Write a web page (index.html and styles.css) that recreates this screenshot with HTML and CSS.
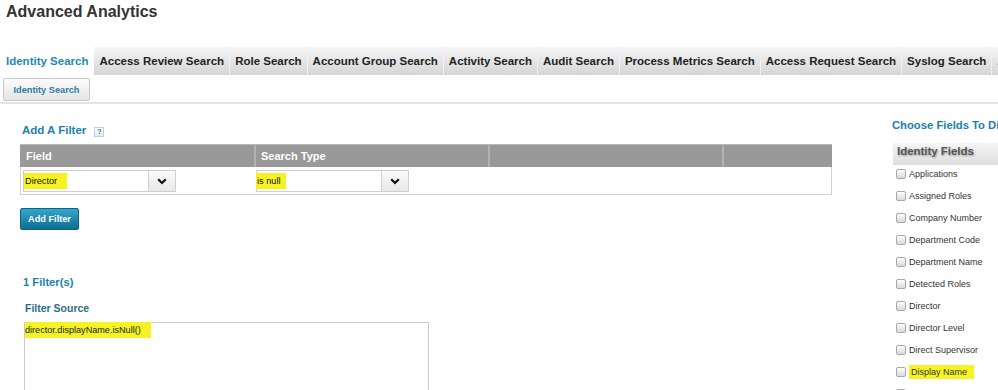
FILE: index.html
```html
<!DOCTYPE html>
<html lang="en">
  <head>
    <meta charset="UTF-8" />
    <meta name="viewport" content="width=device-width, initial-scale=1.0" />
    <title>Advanced Analytics</title>
    <link rel="stylesheet" href="styles.css">
  </head>
  <body>
    <div class="page">
      <h1 class="title">Advanced Analytics</h1>

      <div class="tabs">
        <div class="tab active">Identity Search</div>
        <div class="tab">Access Review Search</div>
        <div class="tab">Role Search</div>
        <div class="tab">Account Group Search</div>
        <div class="tab">Activity Search</div>
        <div class="tab">Audit Search</div>
        <div class="tab">Process Metrics Search</div>
        <div class="tab">Access Request Search</div>
        <div class="tab">Syslog Search</div>
        <div class="tab">Advanced Search</div>
      </div>

      <div class="subbar">
        <button class="subtab">Identity Search</button>
      </div>

      <div class="content">
        <div class="main">
          <div class="section-title">
            Add A Filter
            <span class="help">?</span>
          </div>

          <div class="filter-table">
            <div class="ft-head">
              <div>Field</div>
              <div>Search Type</div>
              <div></div>
              <div></div>
            </div>
            <div class="ft-row">
              <div class="ft-cell">
                <div class="select">
                  <div class="select-value"><span class="mark mark-field">Director</span></div>
                  <div class="select-btn">
                    <svg width="10" height="7" viewBox="0 0 10 7"><polyline points="1.2,1.2 5,5 8.8,1.2" fill="none" stroke="#111" stroke-width="2.2"/></svg>
                  </div>
                </div>
              </div>
              <div class="ft-cell">
                <div class="select">
                  <div class="select-value"><span class="mark mark-type">is null</span></div>
                  <div class="select-btn">
                    <svg width="10" height="7" viewBox="0 0 10 7"><polyline points="1.2,1.2 5,5 8.8,1.2" fill="none" stroke="#111" stroke-width="2.2"/></svg>
                  </div>
                </div>
              </div>
              <div class="ft-cell"></div>
              <div class="ft-cell"></div>
            </div>
          </div>

          <button class="btn-primary">Add Filter</button>

          <div class="count-title">1 Filter(s)</div>
          <div class="source-label">Filter Source</div>
          <div class="source-box"><span class="mark mark-source">director.displayName.isNull()</span></div>
        </div>

        <div class="sidebar">
          <div class="side-title">Choose Fields To Display</div>
          <div class="side-head">Identity Fields</div>
          <div class="field-list">
            <label class="field-item"><span class="check"></span><span class="field-name">Applications</span></label>
            <label class="field-item"><span class="check"></span><span class="field-name">Assigned Roles</span></label>
            <label class="field-item"><span class="check"></span><span class="field-name">Company Number</span></label>
            <label class="field-item"><span class="check"></span><span class="field-name">Department Code</span></label>
            <label class="field-item"><span class="check"></span><span class="field-name">Department Name</span></label>
            <label class="field-item"><span class="check"></span><span class="field-name">Detected Roles</span></label>
            <label class="field-item"><span class="check"></span><span class="field-name">Director</span></label>
            <label class="field-item"><span class="check"></span><span class="field-name">Director Level</span></label>
            <label class="field-item"><span class="check"></span><span class="field-name">Direct Supervisor</span></label>
            <label class="field-item"><span class="check"></span><span class="field-name mark mark-display">Display Name</span></label>
            <label class="field-item"><span class="check"></span><span class="field-name">Email</span></label>
          </div>
        </div>
      </div>
    </div>
  </body>
</html>
```

FILE: styles.css
```css
html,
body {
  height: 390px;
}
body {
  margin: 0;
  font-family: "Liberation Sans", Arial, sans-serif;
  background: #fff;
  overflow: hidden;
}
.page {
  width: 1140px;
}
.title {
  margin: 0;
  padding: 3px 6px 0;
  height: 44px;
  font-size: 16px;
  line-height: 18px;
  font-weight: bold;
  color: #333;
}
.tabs {
  display: flex;
  height: 28px;
  white-space: nowrap;
}
.tab {
  padding: 0 5px;
  border-right: 1px solid #f0f0f0;
  background: linear-gradient(#f6f6f6, #d5d5d5);
  font-size: 11.5px;
  font-weight: bold;
  line-height: 28px;
  color: #222;
}
.tab.active {
  padding-left: 6px;
  background: #fff;
  border-right-color: #fff;
  color: #1f88b3;
}
.subbar {
  padding: 3px 3px 1px;
  border-bottom: 2px solid #e4e4e4;
}
.subtab {
  display: block;
  width: 87px;
  height: 23px;
  padding: 0;
  border: 1px solid #c9c9c9;
  border-radius: 2px;
  background: linear-gradient(#fbfbfb, #e5e5e5);
  font-family: "Liberation Sans", Arial, sans-serif;
  font-size: 9.2px;
  font-weight: bold;
  color: #2a7fa6;
}
.content {
  display: flex;
}
.main {
  flex: none;
  width: 892px;
  padding-left: 20px;
  box-sizing: border-box;
}
.section-title {
  display: flex;
  align-items: center;
  margin: 19px 0 0 2px;
  font-size: 11.5px;
  line-height: 14px;
  font-weight: bold;
  color: #1a82ab;
}
.help {
  width: 8px;
  height: 8px;
  margin: 3px 0 0 8px;
  border: 1px solid #c3ced6;
  background: linear-gradient(#fdfdfd, #e6edf1);
  font-size: 7px;
  line-height: 8px;
  text-align: center;
  color: #2a7fa6;
}
.filter-table {
  width: 812px;
  margin-top: 7px;
}
.ft-head {
  display: grid;
  grid-template-columns: 234px 234px 234px 110px;
  height: 23px;
  background: #999;
  border-top: 1px solid #b8b8b8;
  box-sizing: border-box;
}
.ft-head div {
  padding-left: 6px;
  font-size: 11px;
  line-height: 22px;
  font-weight: bold;
  color: #fff;
}
.ft-head div + div {
  padding-left: 5px;
  border-left: 2px solid #b2b2b2;
}
.ft-row {
  display: grid;
  grid-template-columns: 233px 234px 234px 109px;
  border: 1px solid #d6cfd0;
  border-top: none;
}
.ft-cell {
  padding: 3px 2px 2px;
}
.select {
  display: flex;
  width: 153px;
  height: 22px;
  border: 1px solid #cfcfcf;
  box-sizing: border-box;
  background: #fff;
}
.select-value {
  flex: 1;
  font-size: 9.2px;
  line-height: 20px;
  color: #111;
}
.select-btn {
  width: 26px;
  display: flex;
  align-items: center;
  justify-content: center;
  border-left: 1px solid #cfcfcf;
  background: linear-gradient(#fbfbfb, #e8e8e8);
}
.mark {
  background: #f6f323;
}
.mark-field {
  padding: 3px 10px 3px 1px;
}
.mark-type {
  padding: 3px 5px 3px 1px;
  margin-left: -1px;
}
.mark-source {
  padding: 3px 10px 3px 0;
}
.mark-display {
  padding: 2px 7px 2px 2px;
  margin-left: 2px;
}
.btn-primary {
  display: block;
  width: 59px;
  height: 22px;
  margin-top: 13px;
  padding: 0;
  border: 1px solid #0b6385;
  border-radius: 2px;
  background: linear-gradient(#36a6cc, #0c6e92);
  font-family: "Liberation Sans", Arial, sans-serif;
  font-size: 9.2px;
  font-weight: bold;
  color: #fff;
}
.count-title {
  margin: 45px 0 0 3px;
  font-size: 11.2px;
  line-height: 14px;
  font-weight: bold;
  color: #1a82ab;
}
.source-label {
  margin: 13px 0 0 5px;
  font-size: 10.5px;
  line-height: 13px;
  font-weight: bold;
  color: #2b6e84;
}
.source-box {
  width: 405px;
  height: 100px;
  margin: 7px 0 0 4px;
  padding-top: 1px;
  border: 1px solid #cacad2;
  box-sizing: border-box;
  font-size: 9.1px;
  line-height: 12px;
  color: #222;
}
.sidebar {
  flex: none;
  width: 230px;
  padding-top: 14px;
}
.side-title {
  font-size: 11.25px;
  line-height: 14px;
  font-weight: bold;
  color: #1a82ab;
  white-space: nowrap;
}
.side-head {
  height: 22px;
  margin: 11px 0 0 1px;
  padding-left: 4px;
  box-sizing: border-box;
  background: linear-gradient(#f5f5f5, #dedede);
  font-size: 11.45px;
  line-height: 17px;
  font-weight: bold;
  color: #555;
  text-shadow: 1px 1px 2px rgba(0, 0, 0, 0.35);
}
.field-list {
  display: flex;
  flex-direction: column;
  padding-left: 4px;
}
.field-item {
  display: flex;
  align-items: center;
  height: 22px;
  padding-bottom: 4px;
  box-sizing: border-box;
}
.check {
  width: 8px;
  height: 8px;
  border: 1px solid #a8a8a8;
  border-radius: 2px;
  background: linear-gradient(#fdfdfd, #dadada);
}
.field-name {
  margin-left: 3px;
  font-size: 9px;
  color: #333;
}
```
